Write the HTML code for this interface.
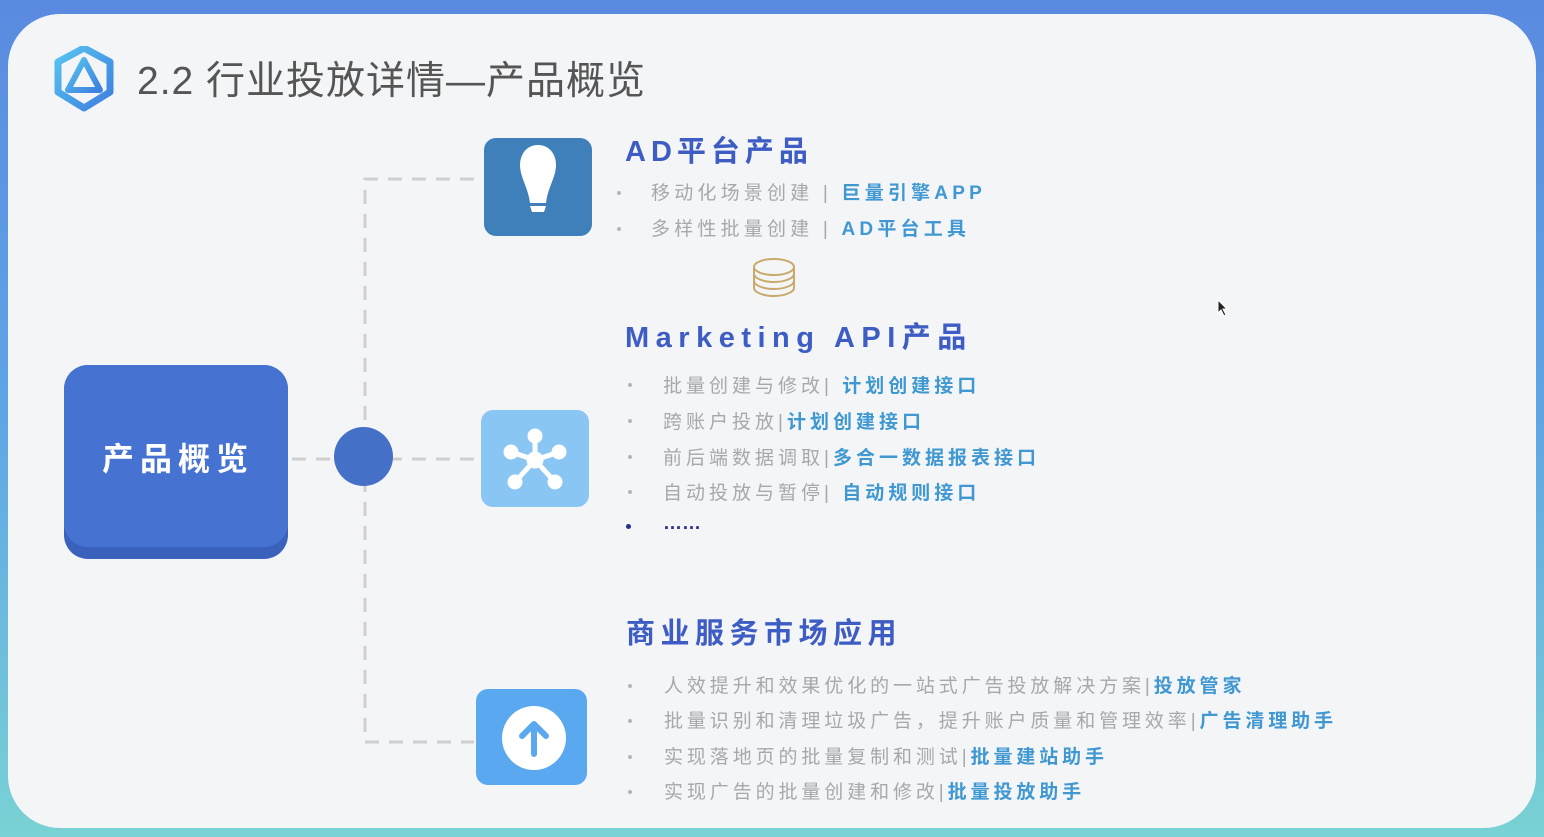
<!DOCTYPE html>
<html><head><meta charset="utf-8"><style>
*{margin:0;padding:0;box-sizing:border-box}
body{width:1544px;height:837px;overflow:hidden;background:linear-gradient(180deg,#5a8ae0 0%,#5fa6e6 50%,#79d2d4 100%);font-family:"Liberation Sans","Noto Sans CJK SC",sans-serif;position:relative}
.card{position:absolute;left:8px;top:14px;width:1528px;height:814px;background:#f4f5f7;border-radius:52px}
.a{position:absolute;white-space:nowrap}
.title{left:137px;top:50px;font-size:39px;color:#555;letter-spacing:1px}
.h{font-weight:bold;color:#3d5cc4;font-size:29px;letter-spacing:5px}
.li{font-size:19px;color:#a6a8ac;letter-spacing:4.2px}
.li b{color:#3f98d2}
.dot{position:absolute;width:4px;height:4px;border-radius:50%;background:#b5b5b5}
</style></head><body>
<div class="card"></div>
<svg class="a" style="left:52px;top:46px" width="64" height="66" viewBox="0 0 64 66">
<defs><linearGradient id="g" x1="0" y1="0" x2="1" y2="1"><stop offset="0" stop-color="#58c4f0"/><stop offset="1" stop-color="#3d7fe0"/></linearGradient></defs>
<path d="M32 2 L58 16 L58 46 L32 62 L6 46 L6 16 Z" fill="none" stroke="url(#g)" stroke-width="7" stroke-linejoin="round"/>
<path d="M32 14 L48 44 L16 44 Z" fill="none" stroke="url(#g)" stroke-width="6" stroke-linejoin="round"/>
</svg>
<div class="a title">2.2 行业投放详情—产品概览</div>

<svg class="a" style="left:0;top:0" width="600" height="837"><g stroke="#cfcfcf" stroke-width="3" fill="none" stroke-dasharray="14,10"><path d="M474 179 H365 V742 H474"/><path d="M292 459 H474"/></g></svg>
<div style="position:absolute;left:334px;top:427px;width:59px;height:59px;border-radius:50%;background:#4570c8"></div>

<div style="position:absolute;left:64px;top:365px;width:224px;height:194px;border-radius:24px;background:#3a62bd"></div>
<div style="position:absolute;left:64px;top:365px;width:224px;height:182px;border-radius:24px;background:#4673d2"></div>
<div class="a" style="left:102px;top:434px;font-size:32px;font-weight:bold;color:#fff;letter-spacing:6px">产品概览</div>

<div style="position:absolute;left:484px;top:138px;width:108px;height:98px;border-radius:12px;background:#3f7fba"></div>
<svg class="a" style="left:518px;top:143px" width="40" height="72" viewBox="0 0 40 72"><path d="M20 2 C8 2 2 12 2 22 C2 34 10 44 12 60 L28 60 C30 44 38 34 38 22 C38 12 32 2 20 2Z" fill="#fff"/><rect x="12" y="60" width="16" height="3" fill="#3f7fba"/><path d="M12 63 L28 63 L26 69 L14 69Z" fill="#fff"/></svg>

<div style="position:absolute;left:481px;top:410px;width:108px;height:97px;border-radius:12px;background:#8ac6f3"></div>
<svg class="a" style="left:501px;top:428px" width="68" height="64" viewBox="0 0 68 64"><g stroke="#fff" stroke-width="5" fill="#fff"><line x1="34" y1="32" x2="34" y2="8"/><line x1="34" y1="32" x2="10" y2="24"/><line x1="34" y1="32" x2="58" y2="24"/><line x1="34" y1="32" x2="14" y2="54"/><line x1="34" y1="32" x2="54" y2="54"/><circle cx="34" cy="32" r="6"/><circle cx="34" cy="8" r="5"/><circle cx="10" cy="24" r="5"/><circle cx="58" cy="24" r="5"/><circle cx="14" cy="54" r="5"/><circle cx="54" cy="54" r="5"/></g></svg>

<div style="position:absolute;left:476px;top:689px;width:111px;height:96px;border-radius:12px;background:#5aa8ef"></div>
<svg class="a" style="left:501px;top:705px" width="66" height="66" viewBox="0 0 66 66"><circle cx="33" cy="33" r="32" fill="#fff"/><path d="M33 49 L33 20 M21 31 L33 19 L45 31" stroke="#5aa8ef" stroke-width="6" fill="none" stroke-linecap="round" stroke-linejoin="round"/></svg>

<svg class="a" style="left:751px;top:257px" width="46" height="46" viewBox="0 0 46 46"><g fill="none" stroke="#c9aa6a" stroke-width="2"><ellipse cx="23" cy="10" rx="20" ry="8"/><path d="M3 10 v7 c0 4 9 8 20 8 s20-4 20-8 v-7"/><path d="M3 17 v7 c0 4 9 8 20 8 s20-4 20-8 v-7"/><path d="M3 24 v7 c0 4 9 8 20 8 s20-4 20-8 v-7"/></g></svg>

<div class="a h" style="left:625px;top:128px">AD平台产品</div>
<div class="dot" style="left:617px;top:191px"></div><div class="a li" style="left:651px;top:178px">移动化场景创建 | <b>巨量引擎APP</b></div>
<div class="dot" style="left:617px;top:227px"></div><div class="a li" style="left:651px;top:214px">多样性批量创建 | <b>AD平台工具</b></div>

<div class="a h" style="left:625px;top:314px;letter-spacing:6.5px">Marketing API产品</div>
<div class="dot" style="left:628px;top:383px"></div><div class="a li" style="left:663px;top:371px;letter-spacing:4px">批量创建与修改| <b>计划创建接口</b></div>
<div class="dot" style="left:628px;top:419px"></div><div class="a li" style="left:663px;top:407px;letter-spacing:4px">跨账户投放|<b>计划创建接口</b></div>
<div class="dot" style="left:628px;top:455px"></div><div class="a li" style="left:663px;top:443px;letter-spacing:4px">前后端数据调取|<b>多合一数据报表接口</b></div>
<div class="dot" style="left:628px;top:490px"></div><div class="a li" style="left:663px;top:478px;letter-spacing:4px">自动投放与暂停| <b>自动规则接口</b></div>
<div class="dot" style="left:626px;top:524px;width:5px;height:5px;background:#2a2f8a"></div><div class="a" style="left:663px;top:513px;font-size:19px;color:#2a2f8a;font-weight:bold;letter-spacing:0px">……</div>

<div class="a h" style="left:626px;top:610px;letter-spacing:5.5px">商业服务市场应用</div>
<div class="dot" style="left:628px;top:684px"></div><div class="a li" style="left:664px;top:671px;letter-spacing:3.9px">人效提升和效果优化的一站式广告投放解决方案|<b>投放管家</b></div>
<div class="dot" style="left:628px;top:719px"></div><div class="a li" style="left:664px;top:706px;letter-spacing:3.9px">批量识别和清理垃圾广告，提升账户质量和管理效率|<b>广告清理助手</b></div>
<div class="dot" style="left:628px;top:755px"></div><div class="a li" style="left:664px;top:742px;letter-spacing:3.9px">实现落地页的批量复制和测试|<b>批量建站助手</b></div>
<div class="dot" style="left:628px;top:790px"></div><div class="a li" style="left:664px;top:777px;letter-spacing:3.9px">实现广告的批量创建和修改|<b>批量投放助手</b></div>

<svg class="a" style="left:1217px;top:299px" width="12" height="18" viewBox="0 0 12 18"><path d="M1 1 L1 14 L4 11 L7 17 L9 16 L6 10 L10 10 Z" fill="#222" stroke="#fff" stroke-width="1"/></svg>
</body></html>
